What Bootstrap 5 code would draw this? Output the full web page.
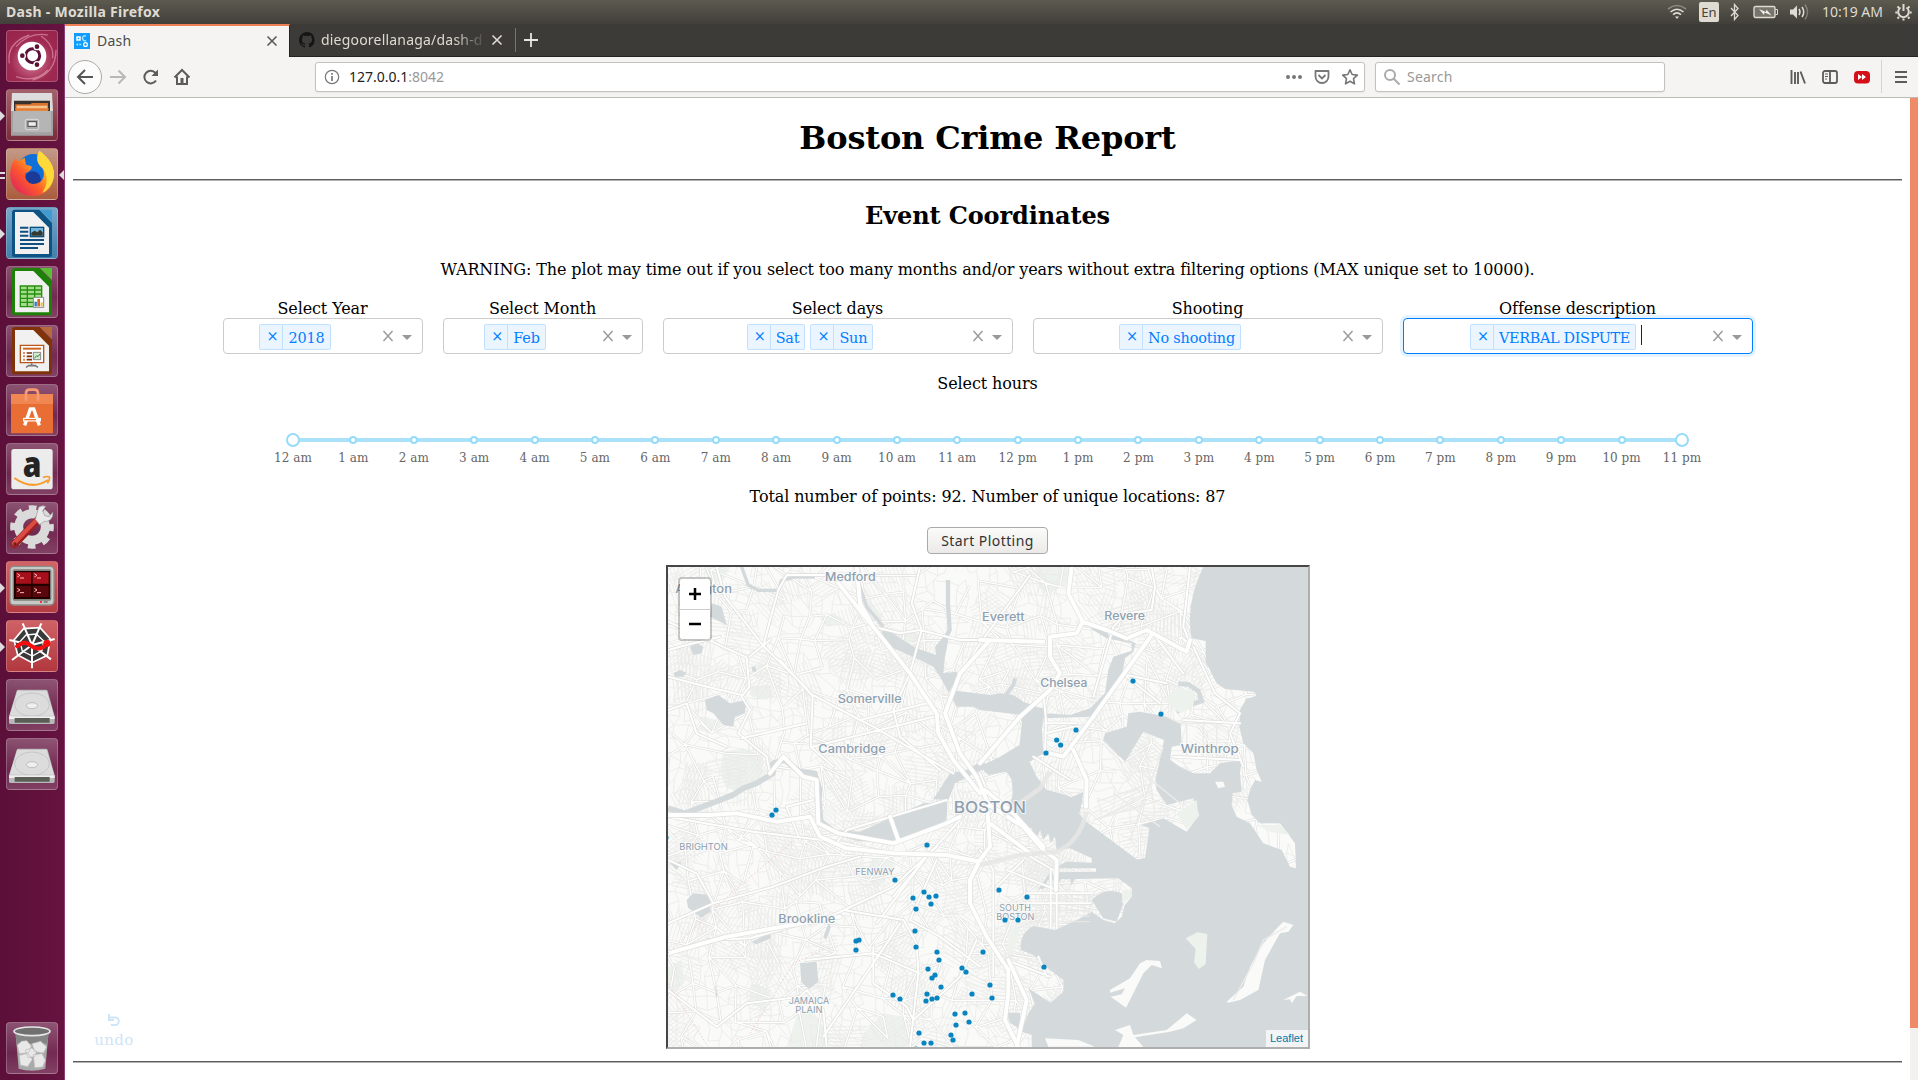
<!DOCTYPE html>
<html lang="en">
<head>
<meta charset="utf-8">
<title>Dash</title>
<link href="https://cdn.jsdelivr.net/npm/bootstrap@5.3.0/dist/css/bootstrap.min.css" rel="stylesheet">
<style>
html,body{height:1080px;overflow:hidden}
body{width:1918px;background:#fff;color:#000;font-family:"DejaVu Serif",serif;font-size:16px;line-height:19px;letter-spacing:-.11px}
svg{display:block;flex:none}
.ui{font-family:"Noto Sans",sans-serif;font-size:14px;line-height:18px;letter-spacing:0}
.panel{height:24px;background:linear-gradient(#5d5a4f,#403f3a);color:#dfdbd2;padding:0 6px 0 6px}
.panel b{font-size:14px;letter-spacing:.28px}
.lang{width:20px;height:20px;background:#dfdbd2;color:#44423c;border-radius:2px;font-size:13px;line-height:20px}
.launcher{width:65px;height:1056px;background:linear-gradient(90deg,#5b0f39,#661340);border-right:1px solid #8a3f77;padding:6px 6px 6px 6px;gap:7px}
.tile{width:52px;height:52px;border-radius:4px;position:relative;border:1px solid rgba(255,255,255,.22);background:linear-gradient(rgba(255,255,255,.28),rgba(255,255,255,.1) 60%,rgba(255,255,255,.2))}
.tile svg{margin:-1px;overflow:visible}
.run:before,.act:after{content:"";position:absolute;top:21px;border:5px solid transparent}
.run:before{left:-7px;border-left-color:#ddd;border-right:0}
.two:before{left:-7px;width:5px;height:7px;border:solid #ddd;border-width:2px 0;top:23px}
.act:after{right:-7px;border-right-color:#ddd;border-left:0}
.tabs{height:33px;background:#3c3b37}
.tab-on{width:225px;height:33px;background:#f5f4f2;border-top:2px solid #ee7f58;border-right:1px solid #222;color:#4c4c4c;padding:0 10px 1px 9px}
.tab-off{width:225px;height:33px;border-bottom:1px solid #252420;color:#dfdbd2;padding:0 11px 0 9px}
.tab-fill{height:33px;border-bottom:1px solid #252420}
.fade-text{width:166px;white-space:nowrap;letter-spacing:.2px;-webkit-mask-image:linear-gradient(90deg,#000 80%,transparent 100%);mask-image:linear-gradient(90deg,#000 80%,transparent 100%)}
.tools{height:41px;background:#f5f4f2;border-bottom:1px solid #bdbbb8;padding-left:3px;padding-bottom:1px}
.back{width:34px;height:34px;border:1px solid #aaa;border-radius:50%;background:#fcfcfc}
.urlbox{height:30px;background:#fff;border:1px solid #c3c1be;border-radius:3px;box-shadow:0 1px 2px rgba(0,0,0,.06)}
.page-area{width:1845px;height:982px;padding:0 8px}
.track-bar{width:8px;height:982px;background:#f2f1f0}
.track-bar div{height:930px;background:#f08b68}
h1.ttl{font-size:32px;line-height:38px;font-weight:bold;margin:0 0 22px;padding-top:21px;letter-spacing:-.14px}
h2.ttl{font-size:24px;line-height:28px;font-weight:bold;margin:21px 0 30px;letter-spacing:-.12px}
.rule{height:2px;background:linear-gradient(#5c5c5c 50%,#b3b3b3 50%)}
.ctl{height:36px;border:1px solid #ccc;border-radius:4px;padding:1px 6px 0 0}
.ctl.focus-on{border-color:#007eff;box-shadow:0 0 0 3px rgba(0,126,255,.1)}
.chips{gap:5px;flex:1}
.chip{font-size:14.4px;line-height:20px;height:26px;border:1px solid #c2e0ff;border-radius:2px;background:#ebf5ff;color:#007eff;white-space:nowrap;letter-spacing:-.15px}
.chip.upper{letter-spacing:-.33px}
.chip i{font-style:normal;padding:1px 6px 3px;width:23px;text-align:center;border-right:1px solid #c2e0ff}
.chip span{padding:3px 5px 1px}
.caret{width:1px;height:20px;background:#222;margin:0 -6px 4px 0}
.slider{width:1389px;height:4px;background:#abe2fb;margin:0 auto;position:relative}
.slider div{position:absolute;width:8px;height:8px;margin:-2px 0 0 -4px;border:2px solid #96dbfa;border-radius:50%;background:#fff}
.slider div.knob{width:14px;height:14px;margin:-5px 0 0 -7px}
.slider span{position:absolute;top:13px;transform:translateX(-50%);font-size:12px;line-height:14px;letter-spacing:.05px;color:#666;white-space:nowrap}
.gobtn{width:121px;height:27px;border:1px solid #aaa;border-radius:4px;background:linear-gradient(#fbfbfa,#ebeae8);color:#333;margin:21px auto 0;letter-spacing:.42px}
.frame{width:644px;height:484px;border:2px solid;border-color:#464646 #aeaeae #aeaeae #464646;margin:11px auto 0;position:relative}
.zoomer{position:absolute;left:10px;top:10px;width:34px;height:64px;border:2px solid rgba(0,0,0,.2);border-radius:4px;background:#fff;background-clip:padding-box}
.zoomer div{height:30px}
.zoomer div+div{border-top:1px solid #ccc}
.leaf{position:absolute;right:0;bottom:0;width:42px;height:17px;background:rgba(255,255,255,.7);font:11px/17px "Liberation Sans",sans-serif;letter-spacing:0;color:#0078a8;text-align:center}
.undo{position:absolute;left:92px;top:1012px;width:44px;color:#cfe5f8;font-size:15px;line-height:18px;letter-spacing:.4px}
</style>
<script src="https://cdn.jsdelivr.net/npm/bootstrap@5.3.0/dist/js/bootstrap.bundle.min.js"></script>
</head>
<body>
<div class="panel ui d-flex align-items-center">
  <b class="me-auto">Dash - Mozilla Firefox</b>
  <svg width="20" height="16" viewBox="0 0 20 16" fill="none" stroke="#dfdbd2" stroke-width="1.6"><path d="M1 5Q10-2 19 5" opacity=".4"/><path d="M3.5 8Q10 2.500 16.500 8M6 10.700Q10 7 14 10.700"/><path d="M8 12.500h4l-2 2.500z" fill="#dfdbd2" stroke="none"/></svg>
  <div class="lang text-center" style="margin-left:12px">En</div>
  <svg style="margin-left:11px" width="10" height="18" viewBox="0 0 10 18" fill="none" stroke="#dfdbd2" stroke-width="1.3"><path d="M1 5l7 7.500-3.500 4V1.500L8 5.500 1 13"/></svg>
  <svg style="margin-left:13px" width="25" height="14" viewBox="0 0 25 14"><rect x="1" y="1.500" width="21" height="11" rx="1.500" fill="#77746b" stroke="#dfdbd2" stroke-width="1.400"/><path d="M22.500 4.500h2v5h-2" fill="none" stroke="#dfdbd2"/><path d="M6 4l7 3 .5-2.500 5 6-7-3-.5 2.500z" fill="#eee"/></svg>
  <svg style="margin-left:11px" width="21" height="18" viewBox="0 0 21 18" fill="none" stroke="#dfdbd2" stroke-width="1.500"><path d="M1 6.500h3l4-4v13l-4-4H1z" fill="#dfdbd2" stroke="none"/><path d="M10 6q2 3 0 6M13 4q3.500 5 0 10"/><path d="M16 1.500q5 7.500 0 15" opacity=".35"/></svg>
  <span style="margin:0 12px">10:19 AM</span>
  <svg width="17" height="18" viewBox="0 0 17 18" fill="none" stroke="#dfdbd2" stroke-width="2"><path d="M5.500 4.500a5.300 5.300 0 1 0 6 0M8.500 1v7"/><path d="M2.500 3.500l1.500 1.500M14.500 3.500l-1.500 1.500M.3 9.500h2M14.700 9.500h2M2.500 15.500l1.500-1.500M14.500 15.500l-1.500-1.500M8.500 15.500v2"/></svg>
</div>
<div class="d-flex">
 <nav class="launcher d-flex flex-column">
  <div class="tile" style="background:radial-gradient(circle at 50% 60%,#d9819c,#a02a52 55%,#96234a)"><svg width="52" height="52" viewBox="0 0 156 156"><path d="M10 100Q0 40 70 15M150 60Q150 130 80 150M30 140Q90 160 125 120M125 15Q70 5 30 50M140 85Q145 45 105 18" stroke="#e6a3b8" stroke-width="4" fill="none" opacity=".6"/><circle cx="78" cy="78" r="43" fill="#fff"/><circle cx="80" cy="77" r="21" fill="none" stroke="#5b1234" stroke-width="9"/><g fill="#5b1234" stroke="#fff" stroke-width="4"><circle cx="49" cy="77" r="9"/><circle cx="93" cy="50" r="9"/><circle cx="93" cy="104" r="9"/></g></svg></div>
  <div class="tile run" style="background:linear-gradient(#a3626b,#7a2c3b)"><svg width="52" height="52" viewBox="0 0 156 156"><path d="M18 12h120l3 55H15z" fill="#ddd"/><path d="M24 35h108v32H24z" fill="#39322c"/><path d="M28 46h45l5-4h48v24H28z" fill="#d9742f"/><path d="M32 50h92v14H32z" fill="#f5c38b"/><path d="M28 58h100v6H28z" fill="#e57c34"/><path d="M15 66h126v74H15z" fill="#a2a2a2"/><path d="M21 66h114v64H21z" fill="#b5b5b5"/><rect x="58" y="91" width="40" height="31" rx="5" fill="#aaa" stroke="#ddd" stroke-width="3"/><rect x="66" y="98" width="25" height="14" fill="#eee" stroke="#444" stroke-width="3"/></svg></div>
  <div class="tile run two act" style="background:linear-gradient(#c39a86,#ab5c3d)"><svg width="52" height="52" viewBox="0 0 156 156"><defs><linearGradient id="fx" x1="1" y1="0" x2="0" y2="1"><stop offset="0" stop-color="#fff44f"/><stop offset=".35" stop-color="#ffb01f"/><stop offset=".6" stop-color="#ff5a2b"/><stop offset="1" stop-color="#d5156b"/></linearGradient></defs><circle cx="82" cy="66" r="48" fill="#1070d8"/><circle cx="80" cy="95" r="25" fill="#1b3b9a"/><path d="M100 8Q150 45 143 90Q132 143 78 144Q18 140 12 82Q13 50 29 29Q33 37 35 42Q54 30 56 29L60 50Q70 52 78 56Q76 68 58 76Q54 103 80 108Q108 108 113 85Q117 65 103 55Q90 38 100 8Z" fill="url(#fx)"/><path d="M100 8Q150 45 143 90Q135 125 108 134Q134 100 112 62Q82 40 100 8Z" fill="#ffd83a"/></svg></div>
  <div class="tile run" style="background:linear-gradient(#77a8ca,#417fab)"><svg width="52" height="52" viewBox="0 0 156 156"><path d="M26 8H100L138 48V142q0 8-8 8H26q-8 0-8-8V16q0-8 8-8Z" fill="#0d5384"/><path d="M102 8h36v36z" fill="#3f9bd0"/><path d="M27 15H82L129 62V141H27Z" fill="#f1f1f1"/><path d="M42 62h25M42 74h25M42 86h25M42 99h72M42 111h72M42 123h54" stroke="#114f80" stroke-width="6"/><rect x="73" y="61" width="40" height="28" fill="#72b5dc" stroke="#0d4f7c" stroke-width="4"/><path d="M76 86V77l10-6 8 5 8-8 8 8v10z" fill="#343b2e"/></svg></div>
  <div class="tile"><svg width="52" height="52" viewBox="0 0 156 156"><path d="M26 6H100L138 46V140q0 8-8 8H26q-8 0-8-8V14q0-8 8-8Z" fill="#1d8108"/><path d="M102 6h36v36z" fill="#5abf35"/><path d="M27 15H82L129 62V139H27Z" fill="#f1f1f1"/><path d="M43 60h64v62H43z" fill="#a6dd8d"/><path d="M43 60h64v62H43zM43 72h64M43 84h64M43 97h64M43 109h64M64 60v62M86 60v62" fill="none" stroke="#248e0e" stroke-width="4"/><path d="M82 94h31v30H82z" fill="#fff" stroke="#888" stroke-width="3"/><path d="M89 121v-14" stroke="#2a7ac0" stroke-width="7"/><path d="M98 121v-22" stroke="#d2691e" stroke-width="8"/><path d="M107 121v-12" stroke="#ecba35" stroke-width="6"/></svg></div>
  <div class="tile"><svg width="52" height="52" viewBox="0 0 156 156"><path d="M26 6H100L138 46V140q0 8-8 8H26q-8 0-8-8V14q0-8 8-8Z" fill="#803308"/><path d="M102 6h36v36z" fill="#b86a3c"/><path d="M27 15H82L129 62V139H27Z" fill="#f1f1f1"/><path d="M43 61h70v52H43z" fill="#fff" stroke="#b9561b" stroke-width="4"/><path d="M51 71h54" stroke="#cf6423" stroke-width="6"/><path d="M51 84h6M51 94h6M51 104h6" stroke="#e08a5c" stroke-width="6"/><path d="M62 84h16M62 94h16M62 104h16" stroke="#7b310a" stroke-width="5"/><path d="M82 82h22v22H82z" fill="#d7e9d3" stroke="#555" stroke-width="2"/><path d="M85 100l7-8 4 3 6-8" stroke="#248e2e" stroke-width="3" fill="none"/><path d="M66 122h24M77 115v5M68 122l-8 5M88 122l8 5" stroke="#777" stroke-width="5"/></svg></div>
  <div class="tile"><svg width="52" height="52" viewBox="0 0 156 156"><path d="M15 30H141V148H15Z" fill="#e96e34"/><path d="M15 30H141V60H15Z" fill="#f08752"/><path d="M60 50V28q0-11 11-11h14q11 0 11 11V50" fill="none" stroke="#f79a72" stroke-width="8"/><path d="M56 124L73 75h10l17 49" stroke="#fff" stroke-width="10" fill="none"/><path d="M51 107h54" stroke="#fff" stroke-width="11"/><path d="M55 107h35" stroke="#ef7237" stroke-width="4"/></svg></div>
  <div class="tile"><svg width="52" height="52" viewBox="0 0 156 156"><rect x="16" y="18" width="124" height="121" rx="8" fill="#ececec"/><text x="78" y="102" text-anchor="middle" font-family="Open Sans" font-weight="800" font-size="104" textLength="56" lengthAdjust="spacingAndGlyphs" fill="#242424">a</text><path d="M25 105Q78 143 126 111" stroke="#f79c2d" stroke-width="6" fill="none"/><path d="M111 103q17-5 20 0 0 9-7 18" stroke="#f79c2d" stroke-width="5" fill="none"/></svg></div>
  <div class="tile"><svg width="52" height="52" viewBox="0 0 156 156"><circle cx="78" cy="75" r="40" fill="none" stroke="#dadada" stroke-width="27"/><circle cx="78" cy="75" r="58" fill="none" stroke="#dadada" stroke-width="15" stroke-dasharray="23 22.500" stroke-dashoffset="11"/><path d="M25 127L101 48" stroke="#9e1f1f" stroke-width="22" stroke-linecap="round"/><path d="M24 124L98 47" stroke="#da4b43" stroke-width="13" stroke-linecap="round"/><circle cx="27" cy="126" r="5" fill="#692020"/><path d="M88 52l10-36q10-7 21-3l-9 14 6 14 13 3 11-13q3 12-7 22-9 7-19 5l-13 10z" fill="#e9e9e9" stroke="#999" stroke-width="2"/></svg></div>
  <div class="tile run" style="background:linear-gradient(#d26366,#b33c42)"><svg width="52" height="52" viewBox="0 0 156 156"><rect x="12" y="16" width="132" height="116" rx="12" fill="#c7c9c6" stroke="#8b8d89" stroke-width="4"/><rect x="20" y="25" width="116" height="94" rx="6" fill="#7e807c"/><path d="M24 30h108v84H24z" fill="#230000"/><path d="M30 34h45v34H30zM80 34h48v34H80z" fill="#a7101a"/><path d="M30 75h45v33H30zM80 75h48v33H80z" fill="#59060c"/><path d="M34 38l8 5-8 5M85 38l8 5-8 5M34 82l8 5-8 5M85 82l8 5-8 5M42 51h12M93 51h12M42 95h12M93 95h12" stroke="#fbb" stroke-width="3" fill="none"/><circle cx="105" cy="123" r="3" fill="red"/><path d="M113 123h12" stroke="#888" stroke-width="6"/></svg></div>
  <div class="tile run" style="background:linear-gradient(#cf6265,#b1383e)"><svg width="52" height="52" viewBox="0 0 156 156"><path d="M53 26L102 23 133 57 124 106 78 128 35 105 24 60Z" fill="#3a3a3a" stroke="#fff" stroke-width="5"/><path d="M78 75L50 10M78 75L106 10M78 75L146 57M78 75L135 118M78 75V145M78 75L18 120M78 75L10 60" stroke="#fff" stroke-width="6"/><path d="M60 45l31-3 22 21-5 29-29 16-30-15-7-28z" fill="none" stroke="#fff" stroke-width="4"/><path d="M30 83Q52 60 70 74T102 85Q112 85 124 68" fill="none" stroke="#f60f0f" stroke-width="12"/><circle cx="123" cy="70" r="11" fill="#f60f0f"/></svg></div>
  <div class="tile"><svg width="52" height="52" viewBox="0 0 156 156"><path d="M32 36q0-4 5-4h82q5 0 6 4l21 76v19q0 4-6 4H15q-6 0-6-4v-19Z" fill="#b9b9b9"/><path d="M34 35h88l22 75H11Z" fill="#dcdcdc"/><ellipse cx="78" cy="77" rx="52" ry="35" fill="none" stroke="#bbb" stroke-width="2"/><ellipse cx="78" cy="80" rx="17" ry="9" fill="#eee" stroke="#aaa" stroke-width="2"/><path d="M9 112h137v8H9z" fill="#eee"/><path d="M26 117h105v14H26z" fill="#5b5e55"/></svg></div>
  <div class="tile"><svg width="52" height="52" viewBox="0 0 156 156"><path d="M32 36q0-4 5-4h82q5 0 6 4l21 76v19q0 4-6 4H15q-6 0-6-4v-19Z" fill="#b9b9b9"/><path d="M34 35h88l22 75H11Z" fill="#dcdcdc"/><ellipse cx="78" cy="77" rx="52" ry="35" fill="none" stroke="#bbb" stroke-width="2"/><ellipse cx="78" cy="80" rx="17" ry="9" fill="#eee" stroke="#aaa" stroke-width="2"/><path d="M9 112h137v8H9z" fill="#eee"/><path d="M26 117h105v14H26z" fill="#5b5e55"/></svg></div>
  <div class="tile mt-auto"><svg width="52" height="52" viewBox="0 0 156 156"><path d="M28 28h100l-10 112q-40 12-80 0Z" fill="#a9a9a9"/><path d="M28 30h100l-4 35H32z" fill="#858585"/><ellipse cx="78" cy="28" rx="54" ry="13" fill="#707070" stroke="#e6e6e6" stroke-width="5"/><g fill="#e8e8e8" stroke="#bbb" stroke-width="2"><path d="M34 70l12-12 16-2 14 16-8 20-28 3zM78 65l26-7 18 17-10 18-26-4zM40 100l25-6 14 18-14 22-22-5zM82 98l26-3 10 20-8 20-24 2zM58 84l18-6 16 10-6 16-20 2z"/></g></svg></div>
 </nav>
 <div class="flex-grow-1">
  <div class="tabs ui d-flex">
   <div class="tab-on d-flex align-items-center">
    <svg width="16" height="16" viewBox="0 0 16 16"><path fill="#119dff" d="M0 0h16v16H0z"/><path d="M3 4h3v3H3z" fill="none" stroke="#fff" stroke-width="1.500"/><path d="M12 3a2.500 2.500 0 1 0 0 4.500" fill="none" stroke="#9ee0ff" stroke-width="1.500"/><circle cx="11.500" cy="11.500" r="1.900" fill="none" stroke="#fff" stroke-width="1.300"/><path d="M2 11.500l2-1.300v2.600zM7.500 11.500l-2-1.300v2.600z" fill="#bff"/></svg>
    <span style="margin-left:7px;letter-spacing:.2px" class="me-auto">Dash</span>
    <svg width="14" height="14" viewBox="0 0 14 14" stroke="#5a5a5a" stroke-width="1.600"><path d="M2.500 2.500l9 9M11.500 2.500l-9 9"/></svg>
   </div>
   <div class="tab-off d-flex align-items-center">
    <svg width="16" height="16" viewBox="0 0 16 16"><path fill="#161514" fill-rule="evenodd" d="M8 0a8 8 0 0 0-2.500 15.600c.4.100.5-.2.500-.4v-1.500c-2.200.5-2.700-1-2.700-1-.4-.9-.9-1.200-.9-1.200-.7-.5.100-.5.100-.5.800.1 1.200.8 1.200.8.700 1.300 1.900.9 2.300.7.100-.5.300-.9.500-1.100-1.800-.2-3.600-.9-3.600-4 0-.9.300-1.600.8-2.100-.1-.2-.4-1 .1-2.100 0 0 .7-.2 2.200.8a7.500 7.500 0 0 1 4 0c1.500-1 2.200-.8 2.200-.8.400 1.100.2 1.900.1 2.100.5.600.8 1.300.8 2.100 0 3.100-1.900 3.700-3.700 3.900.3.300.6.800.6 1.500v2.200c0 .2.100.5.500.4A8 8 0 0 0 8 0z"/></svg>
    <span style="margin-left:6px" class="fade-text me-auto">diegoorellanaga/dash-d</span>
    <svg width="14" height="14" viewBox="0 0 14 14" stroke="#dfdbd2" stroke-width="1.600"><path d="M2.500 2.500l9 9M11.500 2.500l-9 9"/></svg>
   </div>
   <div class="tab-fill flex-grow-1 d-flex align-items-center"><div style="width:1px;height:24px;background:#77756f"></div>
    <svg style="margin-left:7px" width="16" height="16" viewBox="0 0 16 16" stroke="#e8e6e0" stroke-width="1.800"><path d="M8 1v14M1 8h14"/></svg></div>
  </div>
  <div class="tools ui d-flex align-items-center">
   <div class="back d-flex align-items-center justify-content-center"><svg width="18" height="18" viewBox="0 0 18 18" fill="none" stroke="#555" stroke-width="2"><path d="M17 9H2M9 2L2 9l7 7"/></svg></div>
   <svg style="margin-left:7px" width="18" height="18" viewBox="0 0 18 18" fill="none" stroke="#b9b8b6" stroke-width="2"><path d="M1 9h15M9.500 2.500L16 9l-6.500 6.500"/></svg>
   <svg style="margin-left:15px" width="18" height="18" viewBox="0 0 18 18" fill="none" stroke="#5c5c5c" stroke-width="2"><path d="M14 12.500A6.300 6.300 0 1 1 13.500 5"/><path d="M16 1.500v6.500H9.500z" fill="#5c5c5c" stroke="none"/></svg>
   <svg style="margin-left:13px" width="18" height="18" viewBox="0 0 18 18" fill="none" stroke="#5c5c5c" stroke-width="2"><path d="M1.500 9.500L9 2l7.500 7.500M4 8.500V16h10V8.500"/><path d="M7.500 10h3v6h-3z" fill="#5c5c5c" stroke="none"/></svg>
   <div class="urlbox d-flex align-items-center" style="margin-left:124px;width:1050px;padding:0 5px 0 8px">
    <svg width="16" height="16" viewBox="0 0 16 16" fill="none" stroke="#777"><circle cx="8" cy="8" r="6.700" stroke-width="1.200"/><path d="M8 7v5M8 4v1.700" stroke-width="1.700"/></svg>
    <span class="me-auto" style="margin:1px 0 0 9px;color:#222;font-size:14px">127.0.0.1<span style="color:#999">:8042</span></span>
    <svg width="18" height="6" viewBox="0 0 18 6" fill="#777"><circle cx="3" cy="3" r="2"/><circle cx="9" cy="3" r="2"/><circle cx="15" cy="3" r="2"/></svg>
    <svg style="margin-left:10px" width="18" height="18" viewBox="0 0 18 18" fill="none" stroke="#777" stroke-width="1.800"><path d="M2.500 3h13v5.500a6.500 6.500 0 0 1-13 0z" stroke-linejoin="round"/><path d="M5.500 7L9 10.500 12.500 7"/></svg>
    <svg style="margin-left:10px" width="18" height="18" viewBox="0 0 18 18" fill="none" stroke="#777" stroke-width="1.600" stroke-linejoin="round"><path d="M9 1.800l2.200 4.700 5.100.6-3.800 3.500 1 5.200L9 13.300l-4.500 2.500 1-5.200L1.700 7.100l5.100-.6z"/></svg>
   </div>
   <div class="urlbox d-flex align-items-center" style="margin-left:10px;width:290px;padding-left:7px">
    <svg width="18" height="18" viewBox="0 0 18 18" fill="none" stroke="#aaa" stroke-width="2"><circle cx="7" cy="7" r="5"/><path d="M10.500 10.500l6 6"/></svg>
    <span style="margin:1px 0 0 6px;color:#999;letter-spacing:.2px">Search</span>
   </div>
   <svg style="margin-left:124px" width="18" height="18" viewBox="0 0 18 18" stroke="#5c5c5c" stroke-width="1.900" fill="none"><path d="M2.500 2v14M6 4v12M9 4v12M11.500 3.500L16 15.500"/></svg>
   <svg style="margin-left:14px" width="18" height="18" viewBox="0 0 18 18" stroke="#5c5c5c" stroke-width="1.800" fill="none"><rect x="2" y="3" width="14" height="12" rx="2"/><path d="M9 3v12"/><path d="M4 6h3M4 8.500h3M4 11h2" stroke-width="1"/></svg>
   <svg style="margin-left:14px" width="18" height="18" viewBox="0 0 18 18"><rect x="1" y="3" width="16" height="12.500" rx="4" fill="#d40f1a"/><path d="M5 6l4 3-4 3zM9 6l4 3-4 3z" fill="#fff"/></svg>
   <div style="margin-left:10px;width:1px;height:33px;background:#d5d4d2"></div>
   <svg style="margin-left:10px" width="18" height="18" viewBox="0 0 18 18" stroke="#5c5c5c" stroke-width="2"><path d="M3 4h12M3 9h12M3 14h12"/></svg>
  </div>
  <div class="d-flex">
  <main class="page-area text-center">
   <h1 class="ttl">Boston Crime Report</h1>
   <div class="rule"></div>
   <h2 class="ttl">Event Coordinates</h2>
   <div>WARNING: The plot may time out if you select too many months and/or years without extra filtering options (MAX unique set to 10000).</div>
   <div class="d-flex justify-content-center" id="filters" style="gap:20px;margin-top:20px"></div>
   <div style="margin-top:20px">Select hours</div>
   <div style="padding-top:45px"><div class="slider" id="hours"></div></div>
   <div style="margin-top:45px">Total number of points: 92. Number of unique locations: 87</div>
   <div class="gobtn ui d-flex align-items-center justify-content-center">Start Plotting</div>
   <div class="frame">
    <svg width="640" height="480" viewBox="24 21 1920 1440" font-family="Inter,sans-serif" letter-spacing="0" fill="none">
     <path fill="#fafaf8" d="M24 21h1920v1440H24z"/>
     <g fill="#edf2ed"><path d="M190 575l60-10 50 20 10 50-10 30-50 30-50-10-20-50zM275 380l55-5 10 35-35 10-35-15zM480 175l40-15 25 15-15 20-30 5zM620 110l50 60-20 20-30-15zM680 220l90 0 0 20-50 20zM1125 21h110l-10 50-60 30-30-20zM24 1220l40-20 10 70-50 40zM275 1270l60 20-20 60-50-20zM410 1370l40-30 60 90-10 30h-120zM610 1420l60-60 60 10 20 70-10 20h-140zM130 21h80l-20 40-40 10zM120 470l70 20-40 30-30-10z"/><path d="M640 895l60-10 0 50-50 50-40-40z"/></g>
     <g id="fine" stroke="#ebebe9" stroke-width="2.500"></g>
     <g id="mid" stroke-linejoin="round"></g>
     <g fill="#d4dadc"><path d="M135 420l40-15 35 25 50-10-5 40-30 10-5 30-30-5-30-35-20-10zM90 260l20-10 20 10-5 20-25 5zM40 340l20-10 20 8-10 12-25 0zM155 130l30 10 15 55-30-15-20-10zM80 1020l20-20 50 5 2 50-28 18-40-30zM420 1210l50-5 5 60-28 22-23-20zM275 1145l55-25 3 15-45 18zM490 1130l15-40 8 10-15 40zM30 910l35-5-15 25zM275 320l12 0 2 15-12 0zM165 1270l8 35-5 10z"/>
      <path d="M665 215L680 205 720 235 770 265 828 285 825 260 850 230 865 240 855 290 850 340 890 335 895 350 870 390 990 405 1020 400 1060 405 1090 425 1130 440 1150 445 1160 460 1230 465 1290 445 1335 400 1345 330 1360 290 1415 272 1415 250 1340 235 1290 205 1330 200 1345 225 1395 235 1427 250 1420 275 1395 295 1385 350 1340 415 1310 450 1290 470 1150 475 1145 510 1085 510 1085 465 960 450 940 440 890 440 865 395 840 350 820 320 780 300 690 260Z"/>
      <path d="M820 718L865 720 885 670 960 632 1000 618 960 605 920 630 870 640Z"/>
      <path d="M485 720L490 780 530 810 600 815 690 775 790 730 862 725 860 780 790 815 680 847 590 842 520 822 480 790 465 740Z"/>
     </g>
     <g stroke="#d4dadc" stroke-linejoin="round"><path stroke-width="17" d="M24 745l50 15 80-30 65-25 30-20 40-15 50-30 0-30 35-10 45 35 45 5 15 50-5 50"/><path stroke-width="13" d="M864 60l0 70 5 80-15 30"/><path stroke-width="10" d="M600 80l20 60 50 60M245 21l20 55 30 15 60 0 10-30 40-10 60 0"/><path stroke-width="12" d="M1030 415l30-40 5-20"/></g>
     <path fill="#d4dadc" d="M1630 21Q1575 130 1595 235L1637 243V305L1670 370 1695 387 1780 395Q1805 410 1760 415L1740 450 1738 500 1750 550 1780 580 1790 630 1805 665 1785 660 1770 690 1762 720 1775 765 1800 790 1860 790 1905 850 1908 925 1890 920 1865 870 1810 850 1790 820 1770 790 1730 770 1715 735 1718 700 1745 695 1740 640 1745 600 1680 610 1650 640 1600 640 1560 620 1530 600 1535 560 1565 555 1562 490 1520 470 1440 455 1405 460 1400 500 1335 520 1330 540 1395 605 1450 515 1512 540 1485 665 1490 690 1520 735 1600 715 1618 765 1580 815 1510 775 1445 795 1468 805 1455 895 1430 898 1275 782 1258 762 1266 725 1270 695 1235 712 1200 700 1160 690 1130 650 1108 605 1150 580 1145 500 1085 500 1078 555 1020 590 960 620 985 645 1040 635 1055 660 1058 700 1050 740 1055 790 1100 800 1115 805 1120 820 1130 835 1140 810 1150 840 1165 820 1172 850 1185 830 1190 870 1230 865 1295 895V908L1220 905 1180 925 1308 925V935L1170 937 1135 988 1155 985 1162 960 1190 958 1192 976 1203 958 1230 957 1235 975 1245 957 1375 955 1415 985 1415 1010 1395 1035 1385 1070 1365 1090 1330 1080 1295 1055 1250 1080 1185 1110 1120 1098Q1078 1120 1082 1170L1120 1185 1170 1230 1210 1260V1295L1172 1328 1105 1285 1125 1330 1100 1370 1085 1415 1115 1425 1115 1461H1944V21Z"/>
     <path fill="#d4dadc" d="M1295 1020q40-40 90-20l5 30-20 55-40-10zM1040 1358h40v50l-30-20z"/><path stroke="#d4dadc" stroke-width="14" d="M1550 455l40-20 35-12-10-30-30-20-30-2"/>
     <g fill="#fafaf8"><path d="M1350 1290L1410 1255 1440 1210 1460 1200 1500 1203 1506 1225 1475 1215 1450 1240 1420 1300 1398 1343 1352 1310 1385 1303 1395 1285 1350 1298ZM1700 1325L1750 1280 1770 1220 1810 1150 1855 1100 1870 1085 1900 1095 1885 1115 1860 1120 1840 1155 1815 1200 1795 1290 1740 1320 1705 1328ZM1365 1410L1410 1395 1420 1425 1520 1410 1580 1360 1610 1380 1570 1405 1530 1415 1425 1432 1450 1461 1375 1461 1390 1425ZM1870 1320L1920 1295 1942 1308 1910 1308 1895 1330 1890 1318ZM1665 665l25 0 5 15-20 5zM1155 1435l100 5 50 20h-140z"/></g>
     <g fill="#edf2ed"><path d="M1577 1135l35-18 30 5-5 90-20 15-15-20 5-40zM1390 990l20 0 5 20-30 20zM1050 1105l30 0-20 80-20 0zM1510 420l30-30 25-5 40 10-5 45-40 20zM1790 795l70 0 30 30-60-10zM1550 760l60-40 5 50-35 40z"/></g>
     <g stroke="#ecebea" stroke-width="4"><path d="M1310 725l180-60M1410 840l100-280M1330 770l150-80M1300 780l200-60M1400 600l160 130M1360 700l140 100M1455 560l30 200M1520 470l40 20h110M1580 490v100M1630 490v100M1670 490v100M1720 1320l60-110 30-70 70-40"/></g>
     <g id="sb" stroke="#e9e9e7" stroke-width="3"></g>
     <g id="maj" stroke-linejoin="round" stroke-linecap="round"></g>
     <path d="M1030 765l110-80 30-50M960 915l120-30 110-10q70-30 90-120" stroke="#e6e6e5" stroke-width="14" opacity=".8"/>
     <path d="M24 1270l120 190M270 1420l130-210 90-40M24 1180l200-190 180-150" stroke="#efc9c9" stroke-width="2.500" stroke-dasharray="5 6"/>
     <g id="lbl" fill="#8e9fb0" font-weight="500" stroke="#fafaf8" stroke-width="5" paint-order="stroke"></g>
     <g id="pts" fill="#0884c0"></g>
    </svg>
    <div class="zoomer"><div class="d-flex align-items-center justify-content-center"><svg width="12" height="12" stroke="#000" stroke-width="2.500"><path d="M6 0v12M0 6h12"/></svg></div><div class="d-flex align-items-center justify-content-center"><svg width="12" height="12" stroke="#000" stroke-width="2.500"><path d="M0 5h12"/></svg></div></div>
    <div class="leaf">Leaflet</div>
   </div>
   <div class="rule" style="margin-top:12px"></div>
  </main>
  <div class="track-bar"><div></div></div>
  </div>
 </div>
</div>
<div class="undo text-center"><svg class="mx-auto" width="14" height="16" viewBox="0 0 14 16" fill="none" stroke="#cfe5f8" stroke-width="2"><path d="M3 5.500h5a3.800 3.800 0 0 1 0 7.600H4"/><path d="M2 2v6h5"/></svg><div style="margin-top:3px">undo</div></div>
<script>
const $=id=>document.getElementById(id);
// Filter drop-downs
$('filters').innerHTML=[['Select Year',200,['2018']],['Select Month',200,['Feb']],['Select days',350,['Sat','Sun']],['Shooting',350,['No shooting']],['Offense description',350,['VERBAL DISPUTE']]].map((f,i)=>
`<div style="width:${f[1]}px"><div>${f[0]}</div><div class="ctl d-flex align-items-center ${i==4?'focus-on':''}"><div class="chips d-flex justify-content-center align-items-center" style="padding-right:${i==4?9:15}px">${f[2].map(c=>`<div class="chip d-flex ${i==4?'upper':''}"><i>×</i><span>${c}</span></div>`).join('')}${i==4?'<div class="caret"></div>':''}</div><svg width="34" height="20" viewBox="0 0 34 18" fill="none"><path d="M1.500 3l9 10M10.500 3l-9 10" stroke="#999" stroke-width="1.400"/><path d="M20 7h10l-5 5z" fill="#999"/></svg></div></div>`).join('');
// Hour slider marks
let h='';for(let i=0;i<24;i++){const p=i/23*100;h+=`<div class="${i%23?'':'knob'}" style="left:${p}%"></div><span style="left:${p}%">${i%12||12} ${i<12?'am':'pm'}</span>`}$('hours').innerHTML=h;
// Street mesh
let s=7;const r=()=>(s=(s*16807)%2147483647)/2147483647;
function mesh(step,jit,skip){const n=[];for(let y=0;y<1480/step+1;y++){n[y]=[];for(let x=0;x<1900/step+1;x++)n[y][x]=[(20+x*step+(r()-.5)*jit)|0,(10+y*step+(r()-.5)*jit)|0]}
 let d='';n.forEach((row,y)=>row.forEach((p,x)=>{if(row[x+1]&&r()>skip)d+='M'+p+'L'+row[x+1];if(n[y+1]&&r()>skip)d+='M'+p+'L'+n[y+1][x];if(n[y+1]&&n[y+1][x+1]&&r()>.8)d+='M'+p+'L'+n[y+1][x+1]}));return d}
let fine='';for(let i=0;i<330;i++){const cx=r()*1700+30,cy=r()*1440+20,a=r()*3.14,w=30+r()*50,k=4+r()*6|0,c=Math.cos(a),t=Math.sin(a);for(let j=0;j<k;j++){const o=(j-k/2)*11;fine+=`M${(cx-c*w-t*o)|0} ${(cy-t*w+c*o)|0}L${(cx+c*w-t*o)|0} ${(cy+t*w+c*o)|0}`}}
$('fine').innerHTML=`<path d="${fine}"/><path d="${mesh(31,24,.3)}"/>`;
const m=mesh(80,76,.25);
$('mid').innerHTML=`<path d="${m}" stroke="#dfdfdd" stroke-width="7.500"/><path d="${m}" stroke="#fff" stroke-width="4"/>`;
let g='';for(let x=1110;x<1300;x+=18)g+=`M${x} 1000V${x<1200?1090:1062}`;for(let y=1000;y<1090;y+=17)g+=`M1100 ${y}H1290`;$('sb').innerHTML=`<path d="${g}"/>`;
const A=["M24 185L260 292 268 380 245 410 270 450 235 520 320 590 330 640","M170 21L195 110 310 258 440 385 458 410 452 560 520 620","M310 258L330 180 355 90 380 45 495 45","M268 290L330 240M24 350L120 375 245 405M24 270L100 250 180 230","M245 535L440 490M360 300L450 400 600 480 640 500 880 640","M600 480L800 430 850 460M458 560L620 520 820 470","M700 450L720 530 840 630","M640 200L720 220 780 210 900 240 960 240M780 21L755 130 785 210 750 340 700 450","M870 400L960 250 1110 45M535 70L620 190","M24 1180L140 1140 270 1135 520 1065 700 980 830 860","M24 770L280 815 530 845 740 890","M160 1030L340 980 500 920 600 890","M520 860L560 810 860 720","M750 1461L775 1240 770 1150 730 1080 550 1050","M640 1160V1270L740 1340 760 1380 900 1250 950 1140","M490 1430L660 1180 720 1090M440 1200L640 1180 780 1240M24 1290L170 1400 260 1330 420 1310 440 1290 490 1350 500 1461","M800 890L650 1090M830 900L750 1080 840 1130 960 1220","M960 640L1000 740 970 800","M700 1010L800 890 900 780M960 870L1000 930 1000 1250","M1040 930L1190 990M1100 1000H1300M1100 1030H1290M1172 930V1105M1190 930V1105","M1090 900L1010 980M1060 860L1180 930 1190 980","M1150 400L1158 480 1155 580M1155 490H1250M1155 520L1240 500M1120 590L1230 660M1300 410L1360 200 1400 160 1475 150 1485 80 1475 21","M1400 350L1500 430M1400 345L1520 370M1475 215L1570 340M1600 260L1665 400 1740 460 1710 520 1750 620M1570 480L1740 490M1540 590L1740 600M1590 21L1570 200 1590 250","M1135 1190L1160 1250M1040 1200L1170 1250M24 450L80 430 110 520 200 560","M24 1090L160 1030 110 940 24 900M420 840L380 740 460 720"];
const B=["M535 70L640 200 750 340 830 460 835 520 880 600 960 700","M590 21L600 130 640 200M855 460L900 580 950 650 980 720","M855 460L900 340 990 240","M1235 21L1225 100 1268 185 1250 220 1170 230 1170 290 1200 340 1170 390 1080 470 960 610","M960 240L1150 245M1268 185L1340 210 1400 235 1460 210 1580 275 1590 240","M1475 225L1300 470 1210 590 1170 580","M1240 570L1280 660 1278 740","M24 765L150 765 230 760 350 785 450 770 480 830 560 865 700 880 860 885 960 905","M330 640L370 590 430 650 470 660 475 790 535 820 700 850 860 790 900 770","M980 720L990 860 960 900 930 960 930 1030 980 1130 1045 1230 1045 1300 1035 1380 1075 1461","M1045 1200L1100 1320 1070 1461M690 770L715 840","M24 1180L200 1130 340 1105 540 1070","M980 730L1090 800 1150 870 1190 900 1188 990M990 790L1110 880M975 690L1060 760 1150 860"];
const dA=A.join(''),dB=B.join('');
$('maj').innerHTML=`<path d="${dA}" stroke="#dededc" stroke-width="10"/><path d="${dA}" stroke="#fff" stroke-width="6"/><path d="${dB}" stroke="#e0e0de" stroke-width="16"/><path d="${dB}" stroke="#fff" stroke-width="12"/>`;
// Place names: text, left, baseline, size, width
$('lbl').innerHTML=[['Arlington',46,100,34,170],['Medford',495,63,34,152],['Somerville',533,430,34,192],['Cambridge',475,578,34,202],['Everett',966,182,34,128],['Revere',1333,181,34,122],['Chelsea',1141,380,34,141],['Winthrop',1562,578,34,174],['BOSTON',881,758,48,217],['BRIGHTON',58,869,27,145,1],['FENWAY',586,946,27,117,1],['Brookline',355,1089,34,171],['JAMAICA',386,1332,26,122,1],['PLAIN',406,1359,26,82,1],['SOUTH',1018,1053,26,95,1],['BOSTON',1009,1079,26,114,1]].map(t=>`<text x="${t[1]}" y="${t[2]}" font-size="${t[3]}" textLength="${t[4]}" lengthAdjust="spacingAndGlyphs"${t[5]?' font-weight="400"':''}>${t[0]}</text>`).join('');
// Event locations
$('pts').innerHTML=[[1419,363],[1503,462],[1248,510],[1190,540],[1202,555],[1158,579],[348,750],[336,765],[801,855],[705,960],[792,996],[759,1014],[807,1011],[828,1008],[813,1032],[768,1047],[765,1113],[588,1143],[597,1140],[588,1170],[768,1161],[831,1176],[837,1200],[969,1176],[804,1227],[825,1245],[816,1254],[906,1224],[918,1236],[843,1281],[699,1305],[720,1317],[801,1302],[798,1323],[816,1317],[831,1314],[936,1302],[990,1275],[996,1314],[885,1362],[915,1359],[927,1386],[888,1395],[777,1419],[873,1425],[879,1440],[792,1449],[813,1449],[1017,990],[1101,1011],[1035,1080],[1074,1080],[1152,1221],[768,1467],[18,833]].map(p=>`<circle cx="${p[0]}" cy="${p[1]}" r="7.800"/>`).join('');
</script>
</body>
</html>
